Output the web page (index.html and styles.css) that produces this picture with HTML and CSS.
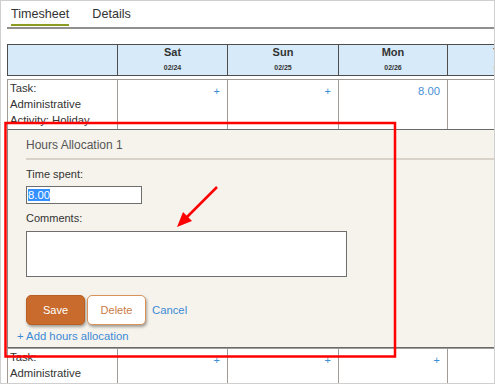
FILE: index.html
```html
<!DOCTYPE html>
<html lang="en">
<head>
    <meta charset="UTF-8">
    <meta name="viewport" content="width=device-width, initial-scale=1.0">
    <title>Timesheet</title>
    <link rel="stylesheet" href="styles.css">
</head>
<body>
    <div class="frame">
        <nav class="tabs">
            <a class="tab active">Timesheet</a>
            <a class="tab">Details</a>
        </nav>

        <div class="sheet">
            <div class="row head">
                <div class="cell"></div>
                <div class="cell day"><b>Sat</b><span>02/24</span></div>
                <div class="cell day"><b>Sun</b><span>02/25</span></div>
                <div class="cell day"><b>Mon</b><span>02/26</span></div>
                <div class="cell day"><b>Tue</b><span>02/27</span></div>
            </div>

            <div class="row entry first">
                <div class="cell task">Task:<br>Administrative<br>Activity: Holiday</div>
                <div class="cell val"><a class="add">+</a></div>
                <div class="cell val"><a class="add">+</a></div>
                <div class="cell val"><a class="amount">8.00</a></div>
                <div class="cell val"></div>
            </div>

            <div class="alloc-panel">
                <div class="alloc">
                    <h3 class="alloc-title">Hours Allocation 1</h3>
                    <label class="field-label">Time spent:</label>
                    <div class="time-input"><span class="selected">8.00</span></div>
                    <label class="field-label">Comments:</label>
                    <div class="comments"></div>
                    <div class="actions">
                        <button class="btn save">Save</button>
                        <button class="btn delete">Delete</button>
                        <a class="cancel">Cancel</a>
                    </div>
                </div>
                <a class="add-alloc">+ Add hours allocation</a>
            </div>

            <div class="row entry second">
                <div class="cell task">Task:<br>Administrative</div>
                <div class="cell val"><a class="add">+</a></div>
                <div class="cell val"><a class="add">+</a></div>
                <div class="cell val"><a class="add">+</a></div>
                <div class="cell val"></div>
            </div>
        </div>

        <!-- red callout drawn over the screenshot -->
        <svg class="callout" width="495" height="384" viewBox="0 0 495 384">
            <rect x="5.5" y="123" width="389.5" height="233.5" fill="none" stroke="#f00" stroke-width="2.5"/>
            <line x1="217" y1="187" x2="186" y2="218" stroke="#f00" stroke-width="2.5"/>
            <polygon points="177,227 183,212 192,221" fill="#f00"/>
        </svg>
    </div>
</body>
</html>
```

FILE: styles.css
```css
body {
    margin: 0;
    padding: 0;
    font-family: 'Liberation Sans', Arial, sans-serif;
    color: #333;
    background-color: #fff;
}

.frame {
    position: relative;
    width: 495px;
    height: 384px;
    border: 1px solid #cfcfcf;
    box-sizing: border-box;
    overflow: hidden;
}

/* tabs */
.tabs {
    display: flex;
    gap: 23px;
    height: 28px;
    margin-left: 6px;
    padding: 6px 0 0 4px;
    box-sizing: border-box;
    border-bottom: 2px solid #8f8f8f;
}

.tab {
    font-size: 12.6px;
    line-height: 15px;
    color: #333;
    padding-bottom: 2px;
    height: 15px;
}

.tab.active {
    border-bottom: 2px solid #8c9c22;
}

/* sheet grid */
.sheet {
    width: 551px;
    margin: 15px 0 0 6px;
}

.row {
    display: grid;
    grid-template-columns: 110px 110px 111px 109px 110px;
    border-left: 1px solid #4d4d4d;
}

.cell {
    box-sizing: border-box;
    border-right: 1px solid #4d4d4d;
}

.head {
    height: 30px;
    background-color: #d6eaf9;
    border-top: 1px solid #4d4d4d;
    border-bottom: 1px solid #4d4d4d;
}

.day {
    display: flex;
    flex-direction: column;
    align-items: center;
    padding-top: 1px;
}

.day b {
    font-size: 11px;
    line-height: 13px;
}

.day span {
    font-size: 7px;
    font-weight: bold;
    line-height: 9px;
    margin-top: 4px;
}

.entry {
    border-left-color: #a19b97;
    overflow: hidden;
}

.entry .cell {
    border-right-color: #a19b97;
}

.entry.first {
    margin-top: 3px;
    height: 49px;
    border-top: 1px solid #a19b97;
}

.entry.second {
    height: 40px;
    border-top: 1px solid #a19b97;
}

.task {
    font-size: 11.3px;
    line-height: 16px;
    padding-left: 2px;
}

.val {
    text-align: right;
    padding: 4px 7px 0 0;
    font-size: 11.3px;
    line-height: 15px;
}

.add {
    color: #3d8fd8;
    font-size: 11px;
}

.amount {
    color: #4a92d6;
    font-size: 11.3px;
}

/* allocation panel */
.alloc-panel {
    height: 219px;
    box-sizing: border-box;
    background-color: #f6f3ec;
    border-top: 1px solid #6b6b6b;
    border-bottom: 1px solid #6b6b6b;
    border-left: 1px solid #8a8580;
}

.alloc {
    margin-left: 18px;
}

.alloc-title {
    margin: 0;
    padding-top: 7px;
    font-size: 12px;
    line-height: 16px;
    font-weight: normal;
    color: #555;
    height: 21px;
    border-bottom: 2px solid #d8d2c8;
}

.field-label {
    display: block;
    font-size: 11px;
    line-height: 15px;
    color: #333;
    margin-top: 7px;
}

.time-input {
    width: 116px;
    height: 18px;
    margin-top: 4px;
    box-sizing: border-box;
    background-color: #fff;
    border: 1px solid #6e6e6e;
    padding: 1px 0 0 1px;
    font-size: 11.3px;
    line-height: 14px;
}

.selected {
    background-color: #3390ff;
    color: #fff;
}

.comments {
    width: 321px;
    height: 46px;
    margin-top: 5px;
    box-sizing: border-box;
    background-color: #fff;
    border: 1px solid #6e6e6e;
}

.actions {
    display: flex;
    align-items: center;
    margin-top: 18px;
}

.btn {
    width: 59px;
    height: 30px;
    border-radius: 5px;
    font-family: 'Liberation Sans', Arial, sans-serif;
    font-size: 11px;
    cursor: pointer;
    box-shadow: 1px 2px 3px rgba(0, 0, 0, 0.35);
}

.save {
    background-color: #c86b2c;
    color: #fff;
    border: 1px solid #b85f24;
}

.delete {
    margin-left: 2px;
    background-color: #fff;
    color: #c97a44;
    border: 1px solid #d9925a;
}

.cancel {
    margin-left: 6px;
    font-size: 11.3px;
    color: #3b8ad6;
}

.add-alloc {
    display: block;
    margin: 4px 0 0 9px;
    font-size: 11.3px;
    line-height: 15px;
    color: #3b8ad6;
}

/* annotation overlay */
.callout {
    position: absolute;
    left: -1px;
    top: -1px;
    pointer-events: none;
}
```
